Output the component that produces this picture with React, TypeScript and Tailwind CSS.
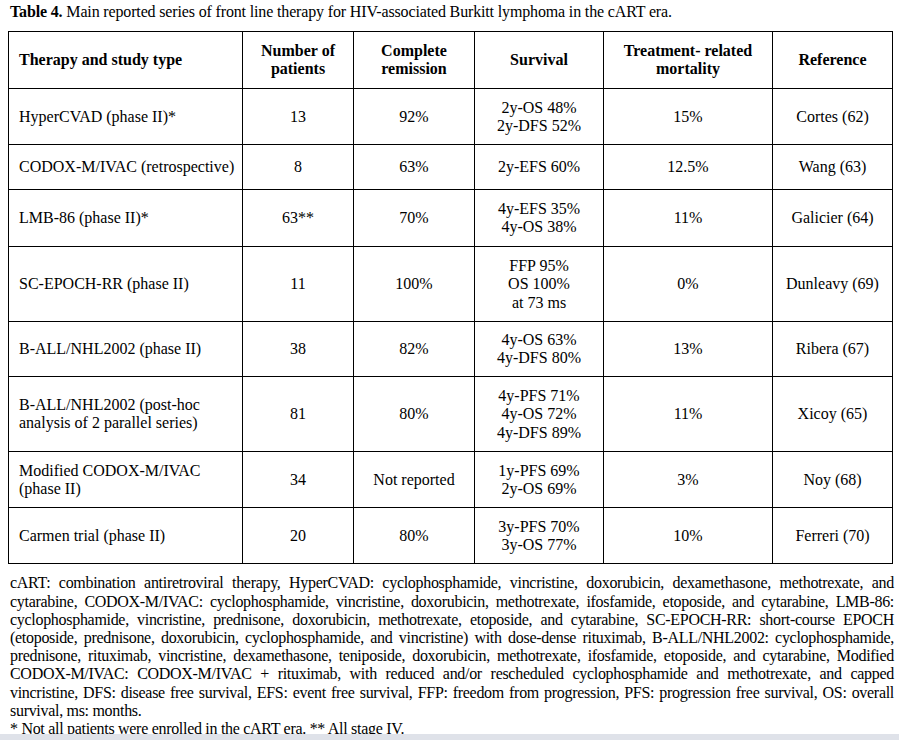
const rows = [
  { therapy: ["HyperCVAD (phase II)*"], n: "13", cr: "92%", survival: ["2y-OS 48%", "2y-DFS 52%"], trm: "15%", ref: "Cortes (62)", h: "h-[56px]" },
  { therapy: ["CODOX-M/IVAC (retrospective)"], n: "8", cr: "63%", survival: ["2y-EFS 60%"], trm: "12.5%", ref: "Wang (63)", h: "h-[45px]" },
  { therapy: ["LMB-86 (phase II)*"], n: "63**", cr: "70%", survival: ["4y-EFS 35%", "4y-OS 38%"], trm: "11%", ref: "Galicier (64)", h: "h-[57px]" },
  { therapy: ["SC-EPOCH-RR (phase II)"], n: "11", cr: "100%", survival: ["FFP 95%", "OS 100%", "at 73 ms"], trm: "0%", ref: "Dunleavy (69)", h: "h-[75px]" },
  { therapy: ["B-ALL/NHL2002 (phase II)"], n: "38", cr: "82%", survival: ["4y-OS 63%", "4y-DFS 80%"], trm: "13%", ref: "Ribera (67)", h: "h-[55px]" },
  { therapy: ["B-ALL/NHL2002 (post-hoc", "analysis of 2 parallel series)"], n: "81", cr: "80%", survival: ["4y-PFS 71%", "4y-OS 72%", "4y-DFS 89%"], trm: "11%", ref: "Xicoy (65)", h: "h-[75px]" },
  { therapy: ["Modified CODOX-M/IVAC", "(phase II)"], n: "34", cr: "Not reported", survival: ["1y-PFS 69%", "2y-OS 69%"], trm: "3%", ref: "Noy (68)", h: "h-[56px]" },
  { therapy: ["Carmen trial (phase II)"], n: "20", cr: "80%", survival: ["3y-PFS 70%", "3y-OS 77%"], trm: "10%", ref: "Ferreri (70)", h: "h-[56px]" },
];

const notes = [
  "cART: combination antiretroviral therapy, HyperCVAD: cyclophosphamide, vincristine, doxorubicin, dexamethasone, methotrexate, and",
  "cytarabine, CODOX-M/IVAC: cyclophosphamide, vincristine, doxorubicin, methotrexate, ifosfamide, etoposide, and cytarabine, LMB-86:",
  "cyclophosphamide, vincristine, prednisone, doxorubicin, methotrexate, etoposide, and cytarabine, SC-EPOCH-RR: short-course EPOCH",
  "(etoposide, prednisone, doxorubicin, cyclophosphamide, and vincristine) with dose-dense rituximab, B-ALL/NHL2002: cyclophosphamide,",
  "prednisone, rituximab, vincristine, dexamethasone, teniposide, doxorubicin, methotrexate, ifosfamide, etoposide, and cytarabine, Modified",
  "CODOX-M/IVAC: CODOX-M/IVAC + rituximab, with reduced and/or rescheduled cyclophosphamide and methotrexate, and capped",
  "vincristine, DFS: disease free survival, EFS: event free survival, FFP: freedom from progression, PFS: progression free survival, OS: overall",
];

const cell = "border border-black align-middle text-center p-0";

function Lines({ items }: { items: string[] }) {
  return (
    <>
      {items.map((t) => (
        <div key={t}>{t}</div>
      ))}
    </>
  );
}

export default function App() {
  return (
    <div className="h-[740px] flex flex-col bg-white text-black font-['Liberation_Serif','Times_New_Roman',serif] text-[16px] leading-[18.4px]">
      <div className="flex-1 overflow-hidden">
        <p className="pl-[10px] pt-[3px] tracking-[-0.15px]">
          <span className="font-bold">Table 4.</span> Main reported series of front line therapy for HIV-associated Burkitt lymphoma in the cART era.
        </p>

        <table className="ml-[8px] mt-[10px] border-collapse table-fixed w-[884px]">
          <colgroup>
            <col className="w-[234px]" />
            <col className="w-[111px]" />
            <col className="w-[121px]" />
            <col className="w-[129px]" />
            <col className="w-[169px]" />
            <col className="w-[120px]" />
          </colgroup>
          <thead>
            <tr className="h-[57px] font-bold">
              <th className={`${cell} !text-left pl-[10px]`}>Therapy and study type</th>
              <th className={cell}>
                <Lines items={["Number of", "patients"]} />
              </th>
              <th className={cell}>
                <Lines items={["Complete", "remission"]} />
              </th>
              <th className={cell}>Survival</th>
              <th className={cell}>
                <Lines items={["Treatment- related", "mortality"]} />
              </th>
              <th className={cell}>Reference</th>
            </tr>
          </thead>
          <tbody>
            {rows.map((r) => (
              <tr key={r.ref} className={r.h}>
                <td className={`${cell} !text-left pl-[10px]`}>
                  <Lines items={r.therapy} />
                </td>
                <td className={cell}>{r.n}</td>
                <td className={cell}>{r.cr}</td>
                <td className={cell}>
                  <Lines items={r.survival} />
                </td>
                <td className={cell}>{r.trm}</td>
                <td className={cell}>{r.ref}</td>
              </tr>
            ))}
          </tbody>
        </table>

        <div className="pl-[10px] w-[894px] mt-[10px] leading-[18.2px] tracking-[-0.3px]">
          {notes.map((l) => (
            <div key={l} className="text-justify [text-align-last:justify]">
              {l}
            </div>
          ))}
          <div>survival, ms: months.</div>
          <div>* Not all patients were enrolled in the cART era. ** All stage IV.</div>
        </div>
      </div>
      <div className="h-[6px] bg-[#dfe2e9]" />
    </div>
  );
}
